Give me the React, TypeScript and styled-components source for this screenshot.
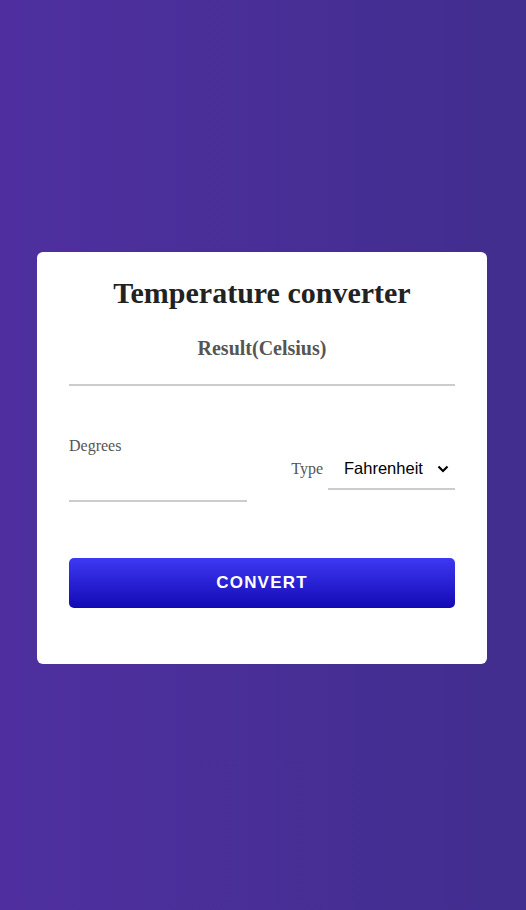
import { useState } from "react";
import styled, { createGlobalStyle } from "styled-components";

const GlobalStyle = createGlobalStyle`
  html, body {
    margin: 0;
    padding: 0;
  }
  body {
    font-family: "Liberation Serif", "Times New Roman", serif;
  }
`;

const Page = styled.div`
  width: 100%;
  min-height: 910px;
  display: flex;
  align-items: center;
  justify-content: center;
  background: linear-gradient(to right, #4f2f9f, #412e8e);
`;

const Card = styled.div`
  width: 450px;
  box-sizing: border-box;
  padding: 23px 32px 56px;
  background-color: #fff;
  border-radius: 6px;
  margin: 6px 2px 0 0;
`;

const Title = styled.h1`
  margin: 0;
  font-size: 30px;
  line-height: 36px;
  font-weight: bold;
  text-align: center;
  color: #222;
`;

const ResultBox = styled.div`
  margin-top: 26px;
  padding-bottom: 25px;
  border-bottom: 2px solid #cccccc;
  text-align: center;
  font-size: 20px;
  line-height: 22px;
  font-weight: bold;
  color: #555;
`;

const Row = styled.div`
  margin-top: 51px;
  display: flex;
  align-items: center;
  justify-content: space-between;
`;

const DegreesGroup = styled.div`
  width: 178px;
  display: flex;
  flex-direction: column;
`;

const Label = styled.label`
  font-size: 16px;
  line-height: 18px;
  color: #555;
`;

const DegreesInput = styled.input`
  margin-top: 5px;
  height: 42px;
  box-sizing: border-box;
  border: none;
  border-bottom: 2px solid #cccccc;
  outline: none;
  font-family: "Liberation Sans", Arial, sans-serif;
  font-size: 16px;
  padding: 0;
`;

const TypeGroup = styled.div`
  display: flex;
  align-items: center;
  gap: 5px;
  margin-top: -2px;
`;

const SelectWrap = styled.div`
  position: relative;
  width: 127px;
`;

const Select = styled.select`
  appearance: none;
  width: 100%;
  height: 42px;
  box-sizing: border-box;
  border: none;
  border-bottom: 2px solid #cccccc;
  outline: none;
  background: transparent;
  padding: 0 0 0 16px;
  font-family: "Liberation Sans", Arial, sans-serif;
  font-size: 16.5px;
  color: #000;
`;

const Chevron = styled.svg`
  position: absolute;
  right: 6px;
  top: 17px;
  pointer-events: none;
`;

const ConvertButton = styled.button`
  margin-top: 56px;
  width: 100%;
  height: 50px;
  border: none;
  border-radius: 5px;
  background: linear-gradient(to bottom, #3d38f3, #130ab5);
  color: #fff;
  font-family: "Liberation Sans", Arial, sans-serif;
  font-size: 17px;
  font-weight: bold;
  letter-spacing: 1.2px;
  cursor: pointer;
`;

function App() {
    const [degrees, setDegrees] = useState("");
    const [type, setType] = useState("fahrenheit");
    return (
        <>
            <GlobalStyle />
            <Page>
                <Card>
                    <Title>Temperature converter</Title>
                    <ResultBox>Result(Celsius)</ResultBox>
                    <Row>
                        <DegreesGroup>
                            <Label htmlFor="degrees">Degrees</Label>
                            <DegreesInput id="degrees" value={degrees} onChange={(e) => setDegrees(e.target.value)} />
                        </DegreesGroup>
                        <TypeGroup>
                            <Label htmlFor="type">Type</Label>
                            <SelectWrap>
                                <Select id="type" value={type} onChange={(e) => setType(e.target.value)}>
                                    <option value="fahrenheit">Fahrenheit</option>
                                    <option value="kelvin">Kelvin</option>
                                </Select>
                                <Chevron width="12" height="8" viewBox="0 0 12 8">
                                    <path d="M1.5 1.5 L6 6 L10.5 1.5" fill="none" stroke="#000" strokeWidth="2.2" />
                                </Chevron>
                            </SelectWrap>
                        </TypeGroup>
                    </Row>
                    <ConvertButton>CONVERT</ConvertButton>
                </Card>
            </Page>
        </>
    );
}

export default App;
